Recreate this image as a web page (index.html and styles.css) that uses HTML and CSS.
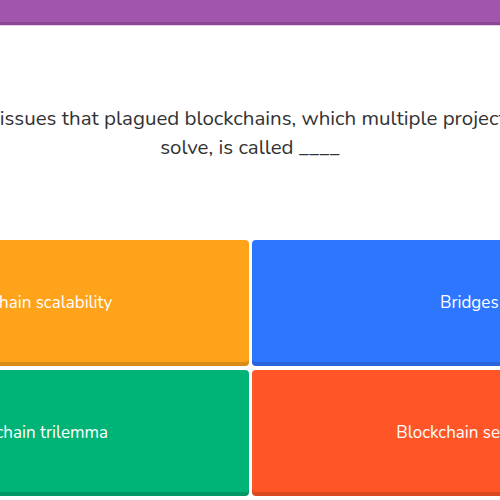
FILE: index.html
```html
<!DOCTYPE html>
<html>
<head>
<meta charset="utf-8">
<link rel="stylesheet" href="styles.css">
</head>
<body>
<div class="topbar"></div>
<div class="stage">
  <div class="content">
    <div class="question">
      <p class="qtext">One of the issues that plagued blockchains, which multiple projects hoped to<br>solve, is called ____</p>
    </div>
    <div class="options">
      <div class="option orange">Blockchain scalability</div>
      <div class="option blue">Bridges</div>
      <div class="option green">Blockchain trilemma</div>
      <div class="option red">Blockchain security</div>
    </div>
  </div>
</div>
</body>
</html>
```
FILE: styles.css
```css
html, body {
  margin: 0;
  padding: 0;
  background: #ffffff;
  overflow: hidden;
  font-family: "Nunito", Lato, "Open Sans", sans-serif;
}
.topbar {
  height: 22px;
  background: #a155ad;
  border-bottom: 3px solid #8b4496;
  box-shadow: 0 1px 0 #e6d3ea;
}
.stage {
  display: flex;
  justify-content: center;
  width: 100%;
}
.content {
  flex: 0 0 874px;
  width: 874px;
}
.question {
  height: 215px;
  display: flex;
  align-items: center;
  justify-content: center;
}
.qtext {
  margin: 0;
  text-align: center;
  font-size: 20.5px;
  line-height: 29px;
  color: #333333;
  white-space: nowrap;
}
.options {
  display: grid;
  grid-template-columns: 435.5px 435.5px;
  grid-template-rows: 126px 126px;
  column-gap: 3px;
  row-gap: 4px;
}
.option {
  border-radius: 4px;
  box-shadow: inset 0 -4px 0 rgba(0, 0, 0, 0.14);
  color: #ffffff;
  font-size: 17px;
  display: flex;
  align-items: center;
  justify-content: center;
  padding-bottom: 2px;
  box-sizing: border-box;
}
.orange { background: #ffa31a; }
.blue { background: #2d76ff; }
.green { background: #00b377; }
.red { background: #ff5527; }
```
